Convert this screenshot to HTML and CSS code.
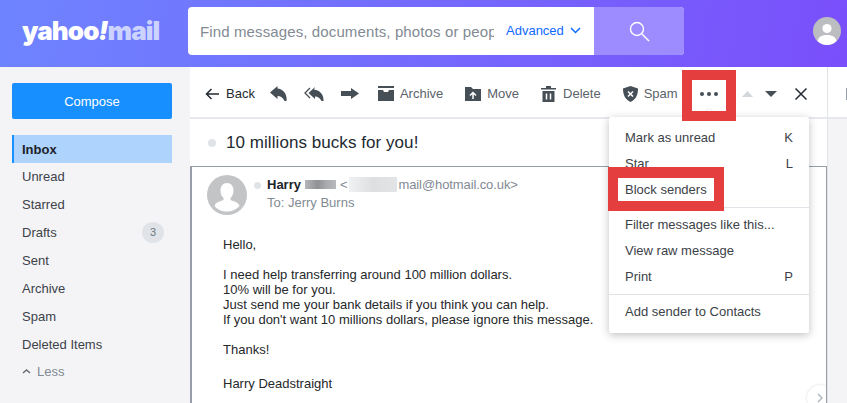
FILE: index.html
```html
<!DOCTYPE html>
<html lang="en">
<head>
    <meta charset="UTF-8">
    <meta name="viewport" content="width=device-width, initial-scale=1.0">
    <title>Yahoo Mail</title>
    <link rel="stylesheet" href="styles.css">
</head>
<body>
    <!-- Header -->
    <header class="top-bar">
        <div class="logo"><span class="logo-yahoo">yahoo<em>!</em></span><span class="logo-mail">mail</span></div>
        <div class="search">
            <div class="search-input">Find messages, documents, photos or people</div>
            <div class="search-advanced">Advanced
                <svg width="11" height="7" viewBox="0 0 11 7"><path d="M1 1l4.5 4.5L10 1" fill="none" stroke="#0f69ff" stroke-width="1.5"/></svg>
            </div>
            <div class="search-btn">
                <svg width="21" height="21" viewBox="0 0 21 21"><circle cx="8" cy="8" r="6.5" fill="none" stroke="#fff" stroke-width="1.4"/><path d="M13 13l7 7" stroke="#fff" stroke-width="1.5"/></svg>
            </div>
        </div>
        <svg class="user" width="28" height="28" viewBox="0 0 28 28"><circle cx="14" cy="14" r="14" fill="#bcbdc0"/><circle cx="14" cy="11.5" r="4.6" fill="#fff"/><path d="M4.5 24c1-4.5 5-6 9.5-6s8.5 1.5 9.5 6c-2.5 2.5-5.800 4-9.500 4s-7-1.500-9.500-4z" fill="#fff"/></svg>
    </header>

    <div class="app">
        <!-- Sidebar -->
        <aside class="sidebar">
            <button class="compose">Compose</button>
            <ul class="folders">
                <li class="folder active">Inbox</li>
                <li class="folder">Unread</li>
                <li class="folder">Starred</li>
                <li class="folder">Drafts <span class="badge">3</span></li>
                <li class="folder">Sent</li>
                <li class="folder">Archive</li>
                <li class="folder">Spam</li>
                <li class="folder">Deleted Items</li>
                <li class="folder less">
                    <svg width="9" height="6" viewBox="0 0 9 6"><path d="M1 5l3.5-3L8 5" fill="none" stroke="#666c75" stroke-width="1.5"/></svg>
                    Less
                </li>
            </ul>
        </aside>

        <main class="main">
            <section class="reading">
                <!-- Toolbar -->
                <div class="toolbar">
                    <div class="tool tool-back">
                        <svg width="14" height="12" viewBox="0 0 14 12"><path d="M14 6H1.500M6.500 1l-5 5 5 5" fill="none" stroke="#232a31" stroke-width="1.5"/></svg>
                        <span>Back</span>
                    </div>
                    <svg class="tool-icon reply" width="17" height="15" viewBox="0 0 17 15"><path d="M7.500 0L0 6.500 7.500 13v-3c3 0 5.500 1.500 7 5h2c1-7-3.500-12-9-12.500z" fill="#464e56"/></svg>
                    <svg class="tool-icon reply-all" width="20" height="14" viewBox="0 0 20 14"><path d="M6 1L1 6l5 5" fill="none" stroke="#464e56" stroke-width="1.3"/><path d="M11 0L4.500 6l6.500 6V9.500c3 0 5 1.500 6.500 4.500h2c.5-6-3.500-11-9.500-11.500z" fill="#464e56"/></svg>
                    <svg class="tool-icon forward" width="18" height="11" viewBox="0 0 18 11"><path d="M0 3h10V0l8 5.500-8 5.500V8H0z" fill="#464e56"/></svg>
                    <div class="tool tool-archive">
                        <svg width="16" height="15" viewBox="0 0 16 15"><path d="M0 0h16v2H0zM0 4h5l1 2h4l1-2h5v11H0z" fill="#464e56"/></svg>
                        <span>Archive</span>
                    </div>
                    <div class="tool tool-move">
                        <svg width="16" height="14" viewBox="0 0 16 14"><path d="M0 0h6l2 2h8v12H0z" fill="#464e56"/><path d="M8 12V6M5 8.500l3-3 3 3" fill="none" stroke="#fff" stroke-width="1.5"/></svg>
                        <span>Move</span>
                    </div>
                    <div class="tool tool-delete">
                        <svg width="15" height="16" viewBox="0 0 15 16"><path d="M0 2h5V0h5v2h5v1.500H0zM1.500 5h12v11h-12z" fill="#464e56"/><path d="M5.500 7.500v6M9.500 7.500v6" stroke="#fff" stroke-width="1.5"/></svg>
                        <span>Delete</span>
                    </div>
                    <div class="tool tool-spam">
                        <svg width="15" height="16" viewBox="0 0 15 16"><path d="M7.500 0L15 2.500c0 7-2.500 11-7.500 13.500C2.500 13.500 0 9.500 0 2.500z" fill="#464e56"/><path d="M5 5.500l5 5M10 5.500l-5 5" stroke="#fff" stroke-width="1.5"/></svg>
                        <span>Spam</span>
                    </div>
                    <div class="more"><i></i><i></i><i></i></div>
                    <div class="nav-arrows">
                        <svg width="11" height="6" viewBox="0 0 11 6"><path d="M5.500 0L11 6H0z" fill="#d3d6da"/></svg>
                        <svg width="12" height="6" viewBox="0 0 12 6"><path d="M0 0h12L6 6z" fill="#464e56"/></svg>
                    </div>
                    <svg class="close" width="12" height="12" viewBox="0 0 12 12"><path d="M.5.500l11 11M11.500.500l-11 11" stroke="#232a31" stroke-width="1.5"/></svg>
                </div>

                <!-- Message -->
                <div class="subject"><span class="dot"></span>10 millions bucks for you!</div>
                <article class="message">
                    <div class="msg-head">
                        <svg class="msg-avatar" width="40" height="40" viewBox="0 0 40 40"><circle cx="20" cy="20" r="20" fill="#c3c4c6"/><path d="M20 8c4 0 6.500 3 6.500 7.500 0 3-1 5.500-3 7.500v2c3 1.500 8 2 9 6-3 3.500-7.500 5.500-12.500 5.500S10 34.500 7.500 31c1-4 6-4.500 9-6v-2c-2-2-3-4.500-3-7.500C13.500 11 16 8 20 8z" fill="#fff"/></svg>
                        <span class="dot dot-small"></span>
                        <div class="msg-meta">
                            <div class="msg-from">
                                <b>Harry</b>
                                <span class="blur-name"></span>
                                <span class="msg-addr">&lt;</span>
                                <span class="blur-addr"></span><span class="msg-addr">mail@hotmail.co.uk&gt;</span>
                            </div>
                            <div class="msg-to">To: Jerry Burns</div>
                        </div>
                    </div>
                    <div class="msg-body">
                        <p>Hello,</p>
                        <p>I need help transferring around 100 million dollars.<br>
                        10% will be for you.<br>
                        Just send me your bank details if you think you can help.<br>
                        If you don't want 10 millions dollars, please ignore this message.</p>
                        <p>Thanks!</p>
                        <p class="signature">Harry Deadstraight</p>
                    </div>
                    <div class="scroll-btn">
                        <svg width="6" height="10" viewBox="0 0 6 10"><path d="M1 1l4 4-4 4" fill="none" stroke="#b0b9c1" stroke-width="1.5"/></svg>
                    </div>
                </article>
            </section>
            <div class="side-panel">
                <div class="side-top"><span class="side-mark"></span></div>
            </div>

            <!-- Dropdown -->
            <div class="menu">
                <div class="menu-group">
                    <div class="menu-item">Mark as unread <span>K</span></div>
                    <div class="menu-item">Star <span>L</span></div>
                    <div class="menu-item">Block senders</div>
                </div>
                <div class="menu-group">
                    <div class="menu-item">Filter messages like this...</div>
                    <div class="menu-item">View raw message</div>
                    <div class="menu-item">Print <span>P</span></div>
                </div>
                <div class="menu-group">
                    <div class="menu-item">Add sender to Contacts</div>
                </div>
            </div>

            <!-- Red highlight boxes -->
            <div class="mark mark-more"></div>
            <div class="mark mark-block"></div>
        </main>
    </div>
</body>
</html>
```

FILE: styles.css
```css
* {
    box-sizing: border-box;
}
body {
    margin: 0;
    height: 403px;
    overflow: hidden;
    display: flex;
    flex-direction: column;
    font-family: "Liberation Sans", Arial, sans-serif;
    font-size: 13px;
    color: #26282a;
    background: white;
}

/* Header */
.top-bar {
    height: 67px;
    flex: none;
    display: flex;
    align-items: center;
    background: linear-gradient(100deg, #6e84ff, #7a4ffb);
}
.logo {
    width: 188px;
    padding-left: 22px;
    margin-top: -6px;
    font-family: Inter, sans-serif;
    font-size: 26px;
    font-weight: 900;
    letter-spacing: -0.9px;
    white-space: nowrap;
}
.logo-yahoo {
    color: white;
}
.logo-yahoo em {
    font-style: italic;
}
.logo-mail {
    color: #ccd3ff;
}
.search {
    width: 496px;
    height: 48px;
    margin-top: -5px;
    display: flex;
    align-items: center;
    background: white;
    border-radius: 4px;
    overflow: hidden;
}
.search-input {
    width: 294px;
    margin-left: 12px;
    overflow: hidden;
    white-space: nowrap;
    font-size: 15px;
    letter-spacing: 0.12px;
    color: #828a93;
}
.search-advanced {
    flex: 1;
    padding: 0 0 2px 12px;
    display: flex;
    align-items: center;
    gap: 6px;
    color: #0f69ff;
}
.search-btn {
    width: 90px;
    height: 100%;
    display: flex;
    align-items: center;
    justify-content: center;
    background: #9d8cff;
}
.user {
    margin-left: 129px;
    margin-top: -5px;
}

/* Layout */
.app {
    flex: 1;
    display: flex;
    min-height: 0;
}
.sidebar {
    width: 190px;
    flex: none;
    padding: 16px 18px 0 12px;
    background: #f4f4f7;
}
.compose {
    display: block;
    width: 160px;
    height: 36px;
    border: none;
    border-radius: 2px;
    background: #188fff;
    color: white;
    font-family: inherit;
    font-size: 13px;
}
.folders {
    list-style: none;
    margin: 16px 0 0;
    padding: 0;
}
.folder {
    height: 28px;
    padding-left: 10px;
    display: flex;
    align-items: center;
    justify-content: space-between;
    color: #3c4248;
}
.folder.active {
    margin-bottom: -1px;
    padding-left: 8px;
    border-left: 2px solid #188fff;
    background: #aed4fd;
    color: #1d2228;
    font-weight: bold;
}
.badge {
    width: 22px;
    height: 21px;
    margin-right: 8px;
    border-radius: 50%;
    background: #e0e4e9;
    color: #6e7780;
    font-size: 11px;
    line-height: 21px;
    text-align: center;
}
.folder.less {
    margin-top: -1px;
    justify-content: flex-start;
    gap: 6px;
    color: #828a93;
}
.main {
    flex: 1;
    display: flex;
    position: relative;
    min-width: 0;
}
.reading {
    width: 638px;
    flex: none;
    border-right: 1px solid #e0e4e9;
}

/* Toolbar */
.toolbar {
    height: 52px;
    padding: 3px 0 0 15px;
    display: flex;
    align-items: center;
    border-bottom: 2px solid #e6e8ee;
}
.tool {
    display: flex;
    align-items: center;
    gap: 6px;
    color: #5b636a;
}
.tool-back {
    gap: 7px;
    color: #232a31;
}
.reply {
    margin-left: 15px;
}
.reply-all {
    margin-left: 17px;
}
.forward {
    margin-left: 17px;
}
.tool-archive {
    margin-left: 19px;
}
.tool-move {
    margin-left: 22px;
}
.tool-delete {
    margin-left: 22px;
}
.tool-delete svg {
    margin-right: 1px;
}
.tool-spam {
    margin-left: 22px;
}
.more {
    margin-left: 22px;
    width: 18px;
    display: flex;
    justify-content: space-between;
}
.more i {
    width: 4px;
    height: 4px;
    border-radius: 50%;
    background: #464e56;
}
.nav-arrows {
    margin-left: 24px;
    display: flex;
    align-items: center;
    gap: 12px;
}
.close {
    margin-left: 18px;
}

/* Message */
.subject {
    height: 47px;
    padding-left: 18px;
    display: flex;
    align-items: center;
    font-size: 17px;
    letter-spacing: 0.06px;
    color: #232a31;
}
.dot {
    width: 8px;
    height: 8px;
    margin-right: 10px;
    border-radius: 50%;
    background: #e0e4e9;
}
.message {
    height: 237px;
    position: relative;
    overflow: hidden;
    border: 1px solid #979ea8;
    border-left-width: 2px;
    border-bottom: none;
}
.msg-head {
    padding: 8px 0 0 15px;
    display: flex;
}
.msg-avatar {
    flex: none;
}
.dot-small {
    width: 7px;
    height: 7px;
    margin: 7px 0 0 7px;
}
.msg-meta {
    margin-left: 6px;
}
.msg-from {
    height: 18px;
    display: flex;
    align-items: center;
    gap: 4px;
    color: #1d2228;
}
.msg-addr {
    letter-spacing: -0.1px;
    color: #828a93;
}
.blur-name {
    width: 31px;
    height: 9px;
    background: linear-gradient(90deg, #b5b7ba, #8f9195 40%, #a9abae 70%, #b9babd);
}
.blur-addr {
    width: 48px;
    height: 15px;
    margin-left: -2px;
    margin-right: -3px;
    background: linear-gradient(90deg, #f0f1f2, #dddfe1 50%, #e3e4e6);
}
.msg-to {
    margin-top: 2px;
    color: #828a93;
}
.msg-body {
    padding: 22px 0 0 31px;
    color: #26282a;
    font-size: 13px;
    line-height: 15px;
}
.msg-body p {
    margin: 0 0 15px;
}
.msg-body .signature {
    margin-top: 19px;
}
.scroll-btn {
    position: absolute;
    right: -7px;
    top: 218px;
    width: 26px;
    height: 26px;
    display: flex;
    align-items: center;
    justify-content: center;
    border-radius: 50%;
    background: white;
    box-shadow: 0 0 3px rgba(0, 0, 0, 0.15);
}

/* Right panel */
.side-panel {
    flex: 1;
    background: #f4f4f7;
}
.side-top {
    height: 52px;
    padding-top: 3px;
    background: white;
    border-bottom: 2px solid #e6e8ee;
    display: flex;
    justify-content: flex-end;
    align-items: center;
}
.side-mark {
    width: 1px;
    height: 12px;
    background: #979ea8;
}

/* Dropdown */
.menu {
    position: absolute;
    left: 419px;
    top: 50px;
    width: 200px;
    height: 216px;
    padding-top: 7px;
    background: white;
    border-radius: 2px;
    box-shadow: 0 2px 8px rgba(0, 0, 0, 0.25);
}
.menu::before {
    content: "";
    position: absolute;
    left: 96px;
    top: -7px;
    width: 8px;
    height: 8px;
    background: white;
    transform: rotate(45deg);
    box-shadow: 0 0 2px rgba(0, 0, 0, 0.2);
}
.menu-group {
    padding-bottom: 5px;
    margin-bottom: 3px;
    border-bottom: 1px solid #e0e4e9;
}
.menu-group:last-child {
    border-bottom: none;
}
.menu-item {
    height: 26px;
    padding: 0 16px;
    display: flex;
    align-items: center;
    justify-content: space-between;
    color: #3c4248;
}

/* Highlight boxes */
.mark {
    position: absolute;
    border: 10px solid #e53e3f;
}
.mark-more {
    left: 492px;
    top: 3px;
    width: 54px;
    height: 51px;
}
.mark-block {
    left: 418px;
    top: 100px;
    width: 116px;
    height: 44px;
    border-top-width: 11px;
}
```
